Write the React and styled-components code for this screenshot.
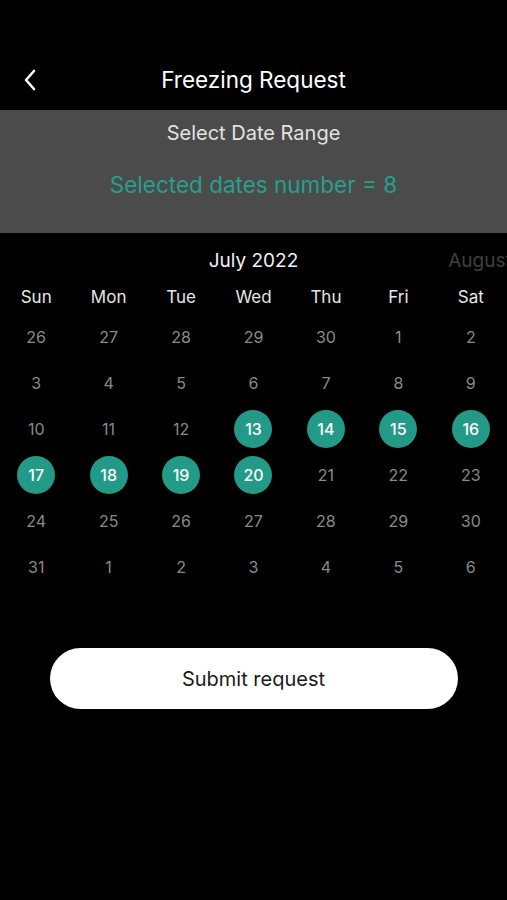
import React from 'react';
import styled, { createGlobalStyle } from 'styled-components';

const GlobalStyle = createGlobalStyle`
  html, body {
    margin: 0;
    padding: 0;
    background: #000;
  }
  body {
    font-family: Inter, "Noto Sans", "Liberation Sans", sans-serif;
  }
`;

const Screen = styled.div`
  width: 507px;
  height: 900px;
  background: #000;
  color: #fff;
  overflow: hidden;
`;

const TopBar = styled.div`
  height: 110px;
  padding-top: 50px;
  box-sizing: border-box;
  display: grid;
  grid-template-columns: 60px 1fr 60px;
  align-items: center;
`;

const BackButton = styled.button`
  background: none;
  border: none;
  padding: 0 0 0 23px;
  height: 60px;
  display: flex;
  align-items: center;
  cursor: pointer;
`;

const Title = styled.h1`
  margin: 0;
  font-size: 22.5px;
  font-weight: 400;
  text-align: center;
  color: #fff;
  line-height: 60px;
`;

const RangePanel = styled.div`
  background: #4b4b4b;
  height: 123px;
  display: flex;
  flex-direction: column;
  align-items: center;
  padding-top: 11px;
  box-sizing: border-box;
`;

const RangeLabel = styled.div`
  font-size: 20px;
  color: #e2e2e2;
  line-height: 24px;
`;

const RangeCount = styled.div`
  margin-top: 26px;
  font-size: 22.5px;
  color: #25a08c;
  line-height: 28px;
`;

const Calendar = styled.div`
  padding-top: 10px;
`;

const MonthRow = styled.div`
  display: grid;
  grid-template-columns: 1fr auto 1fr;
  align-items: center;
  height: 34px;
  overflow: hidden;
  white-space: nowrap;
`;

const MonthName = styled.div`
  font-size: 19px;
  color: ${p => (p.$dim ? '#3f3f3f' : '#f2f2f2')};
  padding-left: ${p => (p.$dim ? '150px' : '0')};
  overflow: hidden;
`;

const Grid = styled.div`
  display: grid;
  grid-template-columns: repeat(7, 1fr);
  margin-top: 3px;
`;

const WeekDay = styled.div`
  height: 34px;
  display: flex;
  align-items: center;
  justify-content: center;
  font-size: 17px;
  color: #e6e6e6;
`;

const Cell = styled.div`
  height: 46px;
  display: flex;
  align-items: center;
  justify-content: center;
`;

const Day = styled.div`
  width: 38px;
  height: 38px;
  border-radius: 50%;
  display: flex;
  align-items: center;
  justify-content: center;
  font-size: 16px;
  background: ${p => (p.$selected ? '#229a87' : 'transparent')};
  color: ${p => (p.$selected ? '#fff' : '#8a8a8a')};
  font-weight: ${p => (p.$selected ? 500 : 400)};
`;

const Footer = styled.div`
  display: flex;
  justify-content: center;
  margin-top: 58px;
`;

const SubmitButton = styled.button`
  width: 408px;
  height: 61px;
  border: none;
  border-radius: 31px;
  background: #fff;
  color: #1a1a1a;
  font-family: inherit;
  font-size: 20px;
  cursor: pointer;
`;

const weekDays = ['Sun', 'Mon', 'Tue', 'Wed', 'Thu', 'Fri', 'Sat'];

const days = [
  26, 27, 28, 29, 30, 1, 2,
  3, 4, 5, 6, 7, 8, 9,
  10, 11, 12, 13, 14, 15, 16,
  17, 18, 19, 20, 21, 22, 23,
  24, 25, 26, 27, 28, 29, 30,
  31, 1, 2, 3, 4, 5, 6,
];

// indexes of the picked range, 13 to 20 July
const isSelected = i => i >= 17 && i <= 24;

export default function App() {
  return (
    <Screen>
      <GlobalStyle />
      <TopBar>
        <BackButton aria-label="Back">
          <svg width="14" height="22" viewBox="0 0 14 22">
            <path d="M11 2 L3 11 L11 20" fill="none" stroke="#fff" strokeWidth="2.6" strokeLinecap="round" strokeLinejoin="round" />
          </svg>
        </BackButton>
        <Title>Freezing Request</Title>
        <div />
      </TopBar>
      <RangePanel>
        <RangeLabel>Select Date Range</RangeLabel>
        <RangeCount>Selected dates number = 8</RangeCount>
      </RangePanel>
      <Calendar>
        <MonthRow>
          <div />
          <MonthName>July 2022</MonthName>
          <MonthName $dim>August 2022</MonthName>
        </MonthRow>
        <Grid>
          {weekDays.map(d => (
            <WeekDay key={d}>{d}</WeekDay>
          ))}
          {days.map((d, i) => (
            <Cell key={i}>
              <Day $selected={isSelected(i)}>{d}</Day>
            </Cell>
          ))}
        </Grid>
      </Calendar>
      <Footer>
        <SubmitButton>Submit request</SubmitButton>
      </Footer>
    </Screen>
  );
}
